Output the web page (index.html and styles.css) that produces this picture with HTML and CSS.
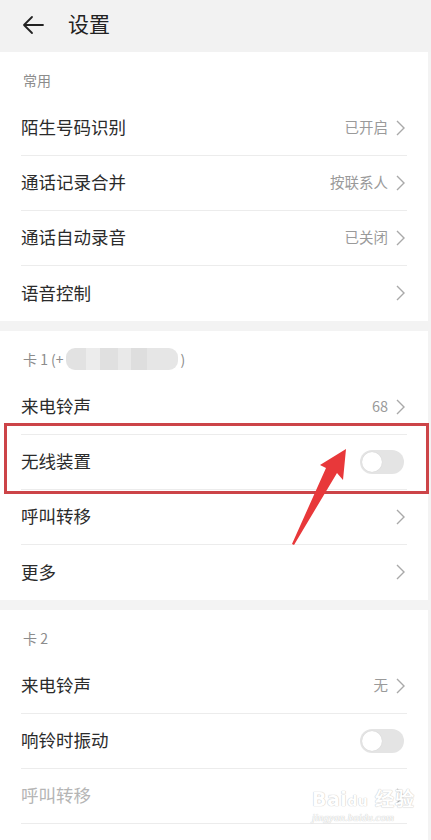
FILE: index.html
```html
<!DOCTYPE html>
<html lang="zh-CN">
<head>
<meta charset="utf-8">
<title>设置</title>
<link rel="stylesheet" href="styles.css">
</head>
<body>
<div class="page">
  <header class="topbar">
    <svg class="back" width="24" height="20" viewBox="0 0 24 20"><path d="M22 10H3M11 2L3 10l8 8" fill="none" stroke="#222" stroke-width="1.8" stroke-linecap="round" stroke-linejoin="round"/></svg>
    <span class="title">设置</span>
  </header>

  <section class="group">
    <div class="ghead">常用</div>
    <div class="row"><span class="label">陌生号码识别</span><span class="val">已开启</span><svg class="chev" width="9" height="16" viewBox="0 0 9 16"><path d="M1 1l7 7-7 7" fill="none" stroke="#a9a9a9" stroke-width="1.4"/></svg></div>
    <div class="row"><span class="label">通话记录合并</span><span class="val">按联系人</span><svg class="chev" width="9" height="16" viewBox="0 0 9 16"><path d="M1 1l7 7-7 7" fill="none" stroke="#a9a9a9" stroke-width="1.4"/></svg></div>
    <div class="row"><span class="label">通话自动录音</span><span class="val">已关闭</span><svg class="chev" width="9" height="16" viewBox="0 0 9 16"><path d="M1 1l7 7-7 7" fill="none" stroke="#a9a9a9" stroke-width="1.4"/></svg></div>
    <div class="row last"><span class="label">语音控制</span><svg class="chev" width="9" height="16" viewBox="0 0 9 16"><path d="M1 1l7 7-7 7" fill="none" stroke="#a9a9a9" stroke-width="1.4"/></svg></div>
  </section>

  <section class="group">
    <div class="ghead">卡 1 (+<span class="blur"></span>)</div>
    <div class="row"><span class="label">来电铃声</span><span class="val">68</span><svg class="chev" width="9" height="16" viewBox="0 0 9 16"><path d="M1 1l7 7-7 7" fill="none" stroke="#a9a9a9" stroke-width="1.4"/></svg></div>
    <div class="row"><span class="label">无线装置</span><span class="toggle"><span class="knob"></span></span></div>
    <div class="row"><span class="label">呼叫转移</span><svg class="chev" width="9" height="16" viewBox="0 0 9 16"><path d="M1 1l7 7-7 7" fill="none" stroke="#a9a9a9" stroke-width="1.4"/></svg></div>
    <div class="row last"><span class="label">更多</span><svg class="chev" width="9" height="16" viewBox="0 0 9 16"><path d="M1 1l7 7-7 7" fill="none" stroke="#a9a9a9" stroke-width="1.4"/></svg></div>
  </section>

  <section class="group">
    <div class="ghead">卡 2</div>
    <div class="row"><span class="label">来电铃声</span><span class="val">无</span><svg class="chev" width="9" height="16" viewBox="0 0 9 16"><path d="M1 1l7 7-7 7" fill="none" stroke="#a9a9a9" stroke-width="1.4"/></svg></div>
    <div class="row"><span class="label">响铃时振动</span><span class="toggle"><span class="knob"></span></span></div>
    <div class="row disabled"><span class="label">呼叫转移</span><svg class="chev" width="9" height="16" viewBox="0 0 9 16"><path d="M1 1l7 7-7 7" fill="none" stroke="#a9a9a9" stroke-width="1.4"/></svg></div>
    <div class="row last"></div>
  </section>

  <div class="redbox"></div>
  <svg class="arrow" width="70" height="110" viewBox="0 0 70 110"><path d="M11 104 L45 28 L39 25 L65 9 L62 40 L56 33 L13 105 Z" fill="#e8383a"/></svg>

  <div class="wm">
    <div class="wm1">Bai<span class="paw">du</span> 经验</div>
    <div class="wm2">jingyan.baidu.com</div>
  </div>
</div>
</body>
</html>
```

FILE: styles.css
```css
* { box-sizing: border-box; }
html, body { margin: 0; padding: 0; }
body {
  background: #f3f3f3;
  font-family: "Noto Sans CJK SC", "Noto Sans", sans-serif;
  color: #333;
}
.page {
  position: relative;
  width: 431px;
  height: 840px;
  overflow: hidden;
  background: #f3f3f3;
}
.topbar {
  height: 52px;
  background: #f2f2f2;
  display: flex;
  align-items: center;
  padding-left: 21px;
}
.back { margin-top: -3px; }
.title {
  margin-left: 23px;
  font-size: 21px;
  color: #222;
  margin-top: -6px;
}
.group {
  background: #fff;
  margin-right: 3px;
  margin-bottom: 10px;
}
.ghead {
  height: 49px;
  display: flex;
  align-items: center;
  padding-left: 23px;
  padding-top: 6px;
  font-size: 14px;
  color: #8c8c8c;
}
.blur {
  display: inline-block;
  width: 112px;
  height: 22px;
  margin-left: 2px;
  margin-right: 3px;
  border-radius: 9px;
  background: linear-gradient(90deg, #e2e2e2 0 18%, #ececec 18% 30%, #e0e0e0 30% 46%, #e9e9e9 46% 58%, #dedede 58% 72%, #e6e6e6 72% 100%);
  filter: blur(0.6px);
}
.row {
  height: 55px;
  margin-left: 21px;
  margin-right: 21px;
  border-bottom: 1px solid #ececec;
  display: flex;
  align-items: center;
  padding-bottom: 3px;
}
.row.last { border-bottom: none; }
.label {
  flex: 1;
  font-size: 17.5px;
  color: #2b2b2b;
}
.disabled .label { color: #b5b5b5; }
.val {
  font-size: 14.5px;
  color: #9a9a9a;
  margin-right: 8px;
}
.chev {
  margin-right: 2px;
  margin-top: 2px;
}
.toggle {
  width: 44px;
  height: 24px;
  border-radius: 12px;
  background: #e4e4e4;
  display: flex;
  align-items: center;
  padding-left: 2px;
  margin-right: 3px;
  margin-top: 3px;
}
.knob {
  width: 20px;
  height: 20px;
  border-radius: 50%;
  background: #fff;
  box-shadow: 0 0 1px rgba(0,0,0,0.15);
}
.redbox {
  position: absolute;
  left: 4px;
  top: 423px;
  width: 425px;
  height: 71px;
  border: 3px solid #cc4448;
}
.arrow {
  position: absolute;
  left: 281px;
  top: 440px;
}
.wm {
  position: absolute;
  left: 312px;
  top: 784px;
  color: #fff;
  text-shadow: 0 0 1px #c8c8c8, 0 0 1px #c8c8c8;
}
.wm1 {
  font-family: "DejaVu Sans", sans-serif;
  font-size: 19px;
  font-weight: bold;
  letter-spacing: 0.5px;
}
.paw { font-size: 14px; }
.wm2 {
  font-family: "Liberation Serif", serif;
  font-style: italic;
  font-size: 11px;
}
```
